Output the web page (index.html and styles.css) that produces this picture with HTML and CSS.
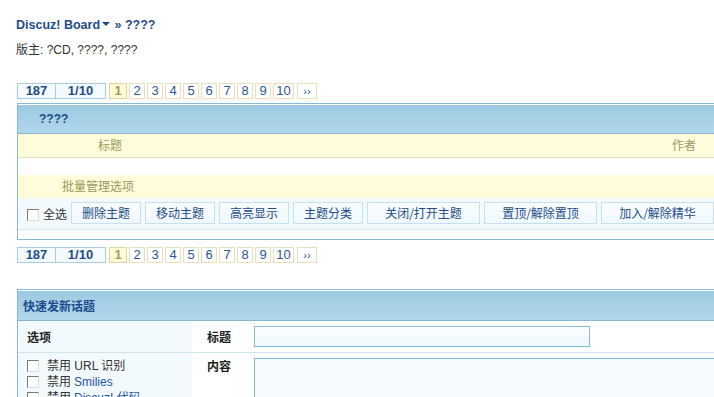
FILE: index.html
```html
<!DOCTYPE html>
<html lang="zh">
<head>
  <meta charset="UTF-8" />
  <title>Discuz! Board - ????</title>
  <link rel="stylesheet" href="styles.css">
</head>
<body>
  <div class="wrap">
    <div class="nav"><a href="#">Discuz! Board</a><span class="drop"></span> &raquo; ????</div>
    <p class="mods">版主: ?CD, ????, ????</p>

    <div class="pages top">
      <span class="count c1">187</span>
      <span class="count c2">1/10</span>
      <strong>1</strong>
      <a href="#">2</a><a href="#">3</a><a href="#">4</a><a href="#">5</a><a href="#">6</a>
      <a href="#">7</a><a href="#">8</a><a href="#">9</a><a href="#" class="wide">10</a><a href="#" class="next">&rsaquo;&rsaquo;</a>
    </div>

    <div class="box threads">
      <div class="box-head"><span class="box-title">????</span></div>
      <div class="cat-row"><span class="col-subject">标题</span><span class="col-author">作者</span></div>
      <div class="blank-row"></div>
      <div class="cat-row mod-row"><span class="mod-label">批量管理选项</span></div>
      <div class="tool-row">
        <label class="check-all"><span class="cb"></span>全选</label>
        <button class="btn">删除主题</button>
        <button class="btn">移动主题</button>
        <button class="btn">高亮显示</button>
        <button class="btn">主题分类</button>
        <button class="btn long">关闭/打开主题</button>
        <button class="btn long">置顶/解除置顶</button>
        <button class="btn long">加入/解除精华</button>
      </div>
      <div class="foot-row"></div>
    </div>

    <div class="pages bottom">
      <span class="count c1">187</span>
      <span class="count c2">1/10</span>
      <strong>1</strong>
      <a href="#">2</a><a href="#">3</a><a href="#">4</a><a href="#">5</a><a href="#">6</a>
      <a href="#">7</a><a href="#">8</a><a href="#">9</a><a href="#" class="wide">10</a><a href="#" class="next">&rsaquo;&rsaquo;</a>
    </div>

    <div class="box post">
      <div class="box-head"><span class="box-title post-title">快速发新话题</span></div>
      <div class="form-row">
        <div class="side"><b>选项</b></div>
        <div class="label"><b>标题</b></div>
        <div class="field"><span class="input"></span></div>
      </div>
      <div class="form-row body-row">
        <div class="side options">
          <div class="opt"><span class="cb"></span>禁用 URL 识别</div>
          <div class="opt"><span class="cb"></span>禁用 <a href="#">Smilies</a></div>
          <div class="opt"><span class="cb"></span>禁用 <a href="#">Discuz! 代码</a></div>
        </div>
        <div class="label"><b>内容</b></div>
        <div class="field"><span class="textarea"></span></div>
      </div>
    </div>
  </div>
</body>
</html>
```

FILE: styles.css
```css
/* Discuz! forum display page */
html, body {
  overflow: hidden;
}
body {
  margin: 0;
  background: #fff;
  color: #333;
  font: 12px "Liberation Sans", "Noto Sans CJK SC", sans-serif;
}
a {
  color: #1d55a6;
  text-decoration: none;
}
.wrap {
  padding: 17px 0 0 16px;
  width: 760px;
}
.nav {
  line-height: 16px;
  font-size: 12.5px;
  font-weight: bold;
  color: #1f4d8c;
}
.nav a {
  color: #1f4d8c;
}
.drop {
  display: inline-block;
  width: 0;
  height: 0;
  margin: 0 1px 0 2px;
  border-left: 4px solid transparent;
  border-right: 4px solid transparent;
  border-top: 4px solid #1f4d8c;
  vertical-align: 3px;
}
.mods {
  margin: 9px 0 0;
  line-height: 16px;
}

/* pager */
.pages {
  display: flex;
  margin-left: 1px;
  height: 16px;
}
.pages.top {
  margin-top: 25px;
}
.pages.bottom {
  margin-top: 7px;
}
.pages .count,
.pages strong,
.pages a {
  box-sizing: border-box;
  height: 16px;
  line-height: 14px;
  font-size: 13px;
  text-align: center;
}
.pages .count {
  border: 1px solid #a9cde1;
  background: #f4fafd;
  color: #1f4d8c;
  font-weight: bold;
}
.pages .c1 { width: 39px; }
.pages .c2 { width: 50px; border-left: none; margin-right: 3px; }
.pages strong {
  width: 18px;
  border: 1px solid #ddd6a4;
  background: #fffbd6;
  color: #9f9a55;
}
.pages a {
  width: 16px;
  margin-left: 2px;
  border: 1px solid #e6e1bc;
  color: #2a5896;
}
.pages a.wide { width: 21px; }
.pages a.next { width: 20px; margin-left: 3px; font-size: 11px; }

/* boxes */
.box {
  border: 1px solid #86b9d6;
  border-right: none;
  margin-left: 1px;
}
.threads {
  margin-top: 4px;
}
.box-head {
  height: 28px;
  border-top: 1px solid #fff;
  border-bottom: 1px solid #88b6cd;
  background: linear-gradient(#9ccae1, #b1d7eb);
  display: flex;
  align-items: center;
}
.box-title {
  padding-left: 21px;
  font-weight: bold;
  color: #1a4b8c;
}
.cat-row {
  display: flex;
  align-items: center;
  box-sizing: border-box;
  height: 24px;
  padding-bottom: 3px;
  background: #fffcdc;
  border-bottom: 1px solid #e8e4c4;
  color: #9a9a5c;
}
.col-subject {
  width: 574px;
  padding-left: 80px;
}
.blank-row {
  height: 17px;
}
.mod-row {
  height: 23px;
  border-bottom: none;
}
.mod-label {
  padding-left: 44px;
}
.tool-row {
  display: flex;
  align-items: flex-start;
  padding: 4px 0 5px;
  background: #f3fafe;
  border-bottom: 1px solid #d6eaf4;
}
.check-all {
  display: flex;
  align-items: center;
  margin: 5px 4px 0 9px;
  line-height: 16px;
  color: #333;
}
.check-all .cb {
  margin-right: 4px;
}
.btn {
  box-sizing: border-box;
  width: 70px;
  height: 22px;
  margin-right: 4px;
  padding: 0 0 1px;
  border: 1px solid #c6e0ee;
  background: linear-gradient(#fafdff, #eff8fd);
  color: #1f4d8c;
  font: 12px "Noto Sans CJK SC", sans-serif;
}
.btn.long {
  width: 113px;
}
.foot-row {
  height: 9px;
}

/* checkbox */
.cb {
  display: inline-block;
  box-sizing: border-box;
  width: 12px;
  height: 12px;
  border: 1px solid;
  border-color: #7c7c7c #dcdcdc #dcdcdc #7c7c7c;
  background: #fff;
  flex: none;
}

/* quick post */
.post {
  margin-top: 26px;
}
.post .box-head {
  height: 29px;
}
.post-title {
  padding-left: 5px;
}
.form-row {
  display: flex;
  height: 31px;
  border-bottom: 1px solid #cfe5ef;
}
.side {
  width: 165px;
  padding-left: 9px;
  background: #f3fafe;
  display: flex;
  align-items: center;
}
.side b,
.label b {
  color: #222;
}
.label {
  width: 47px;
  padding-left: 15px;
  display: flex;
  align-items: center;
}
.field {
  display: flex;
  align-items: center;
}
.input {
  box-sizing: border-box;
  width: 336px;
  height: 21px;
  border: 1px solid #86b9d6;
  background: linear-gradient(#fbfeff, #eef8fd);
}
.body-row {
  height: 60px;
  border-bottom: none;
}
.body-row .side,
.body-row .label,
.body-row .field {
  align-items: flex-start;
}
.options {
  display: block;
  padding-top: 5px;
}
.opt {
  display: flex;
  align-items: center;
  height: 16px;
  line-height: 16px;
}
.opt .cb {
  margin-right: 8px;
}
.opt a {
  margin-left: 3px;
}
.body-row .label {
  padding-top: 6px;
  line-height: 16px;
}
.body-row .field {
  padding-top: 5px;
}
.textarea {
  box-sizing: border-box;
  width: 500px;
  height: 120px;
  border: 1px solid #86b9d6;
  background: #f5fbff;
}
```
